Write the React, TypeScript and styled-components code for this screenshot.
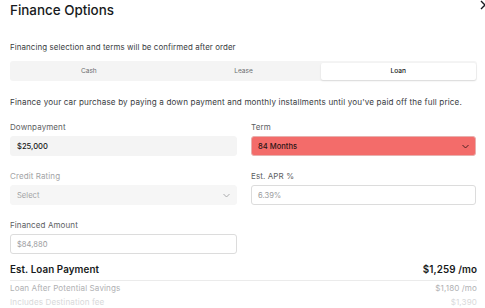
import React from "react";
import styled, { createGlobalStyle } from "styled-components";

const GlobalStyle = createGlobalStyle`
  html, body {
    margin: 0;
    padding: 0;
    background: #ffffff;
    overflow: hidden;
  }
  body {
    font-family: Inter, "Liberation Sans", sans-serif;
    color: #393c41;
  }
`;

function Chevron() {
  return (
    <svg width="7" height="5" viewBox="0 0 7 5" fill="none">
      <path d="M0.5 1l3 3 3-3" stroke="currentColor" strokeWidth="0.9" />
    </svg>
  );
}

export default function App() {
  return (
    <>
      <GlobalStyle />
      <Modal>
        <CloseButton aria-label="Close">
          <svg width="10" height="10" viewBox="0 0 10 10">
            <path d="M1 1l8 8M9 1l-8 8" stroke="#171a20" strokeWidth="1.4" />
          </svg>
        </CloseButton>
        <Title>Finance Options</Title>
        <Note>Financing selection and terms will be confirmed after order</Note>
        <Tabs>
          <Tab>Cash</Tab>
          <Tab>Lease</Tab>
          <Tab $active>Loan</Tab>
        </Tabs>
        <Intro>
          Finance your car purchase by paying a down payment and monthly installments until you've
          paid off the full price.
        </Intro>
        <Grid>
          <Field>
            <Label>Downpayment</Label>
            <Box $variant="filled">$25,000</Box>
          </Field>
          <Field>
            <Label>Term</Label>
            <Box $variant="error">
              84 Months
              <Chevron />
            </Box>
          </Field>
          <Field>
            <Label $muted>Credit Rating</Label>
            <Box $variant="disabled">
              Select
              <Chevron />
            </Box>
          </Field>
          <Field>
            <Label>Est. APR %</Label>
            <Box $variant="outline">6.39%</Box>
          </Field>
          <Field>
            <Label>Financed Amount</Label>
            <Box $variant="outline">$84,880</Box>
          </Field>
        </Grid>
        <Summary>
          <SummaryRow $main>
            <span>Est. Loan Payment</span>
            <span>$1,259 /mo</span>
          </SummaryRow>
          <SummaryRow>
            <span>Loan After Potential Savings</span>
            <span>$1,180 /mo</span>
          </SummaryRow>
          <SummaryRow $faint>
            <span>Includes Destination fee</span>
            <span>$1,390</span>
          </SummaryRow>
        </Summary>
      </Modal>
    </>
  );
}

const Modal = styled.div`
  position: relative;
  width: 485px;
  height: 308px;
  padding: 0 8px 0 10px;
  box-sizing: border-box;
  overflow: hidden;
`;

const CloseButton = styled.button`
  position: absolute;
  top: 0;
  right: -5px;
  padding: 0;
  border: 0;
  background: none;
  line-height: 0;
`;

const Title = styled.h1`
  margin: 0;
  font-size: 13.4px;
  font-weight: 500;
  color: #171a20;
  line-height: 20px;
`;

const Note = styled.p`
  margin: 21px 0 0;
  font-size: 7.9px;
  line-height: 12px;
  letter-spacing: 0.1px;
`;

const Tabs = styled.div`
  display: grid;
  grid-template-columns: repeat(3, 1fr);
  margin-top: 8px;
  padding: 1.5px;
  background: #f4f4f4;
  border-radius: 3px;
  height: 20px;
  box-sizing: border-box;
`;

const Tab = styled.div<{ $active?: boolean }>`
  display: flex;
  align-items: center;
  justify-content: center;
  font-size: 6.6px;
  color: ${(p) => (p.$active ? "#171a20" : "#6b6d70")};
  background: ${(p) => (p.$active ? "#ffffff" : "transparent")};
  box-shadow: ${(p) => (p.$active ? "0 1px 2px rgba(0,0,0,0.12)" : "none")};
  border-radius: 2px;
  font-weight: ${(p) => (p.$active ? 500 : 400)};
`;

const Intro = styled.p`
  margin: 15px 0 0;
  font-size: 8.1px;
  line-height: 12px;
  letter-spacing: 0.15px;
  white-space: nowrap;
`;

const Grid = styled.div`
  display: grid;
  grid-template-columns: 227px 225px;
  column-gap: 14px;
  row-gap: 15px;
  margin-top: 14px;
`;

const Field = styled.div`
  display: flex;
  flex-direction: column;
  gap: 3px;
`;

const Label = styled.label<{ $muted?: boolean }>`
  font-size: 8px;
  line-height: 11px;
  letter-spacing: 0.1px;
  color: ${(p) => (p.$muted ? "#a2a3a5" : "#5c5e62")};
`;

type Variant = "filled" | "error" | "disabled" | "outline";

const boxBg: Record<Variant, string> = {
  filled: "#f4f4f4",
  error: "#f36c6a",
  disabled: "#f6f6f6",
  outline: "#ffffff",
};

const boxBorder: Record<Variant, string> = {
  filled: "#f4f4f4",
  error: "#e8b0ae",
  disabled: "#f6f6f6",
  outline: "#dcdcdc",
};

const boxColor: Record<Variant, string> = {
  filled: "#171a20",
  error: "#2b1414",
  disabled: "#a2a3a5",
  outline: "#9b9c9e",
};

const Box = styled.div<{ $variant: Variant }>`
  display: flex;
  align-items: center;
  justify-content: space-between;
  height: 20px;
  box-sizing: border-box;
  padding: 0 6px 0 6px;
  border-radius: 3px;
  font-size: 7.6px;
  background: ${(p) => boxBg[p.$variant]};
  border: 1px solid ${(p) => boxBorder[p.$variant]};
  color: ${(p) => boxColor[p.$variant]};
  font-weight: ${(p) => (p.$variant === "filled" || p.$variant === "error" ? 500 : 400)};
  svg {
    color: ${(p) => (p.$variant === "error" ? "#3a1a1a" : "#a2a3a5")};
  }
`;

const Summary = styled.div`
  margin-top: 9px;
`;

const SummaryRow = styled.div<{ $main?: boolean; $faint?: boolean }>`
  display: flex;
  justify-content: space-between;
  font-size: ${(p) => (p.$main ? "9.8px" : "8.1px")};
  font-weight: ${(p) => (p.$main ? 600 : 400)};
  line-height: 14px;
  letter-spacing: 0.1px;
  color: ${(p) => (p.$main ? "#171a20" : p.$faint ? "#d8d9da" : "#b0b1b3")};
  border-bottom: ${(p) => (p.$main ? "1px solid #ebebeb" : "none")};
  padding-bottom: ${(p) => (p.$main ? "3px" : "0")};
`;
